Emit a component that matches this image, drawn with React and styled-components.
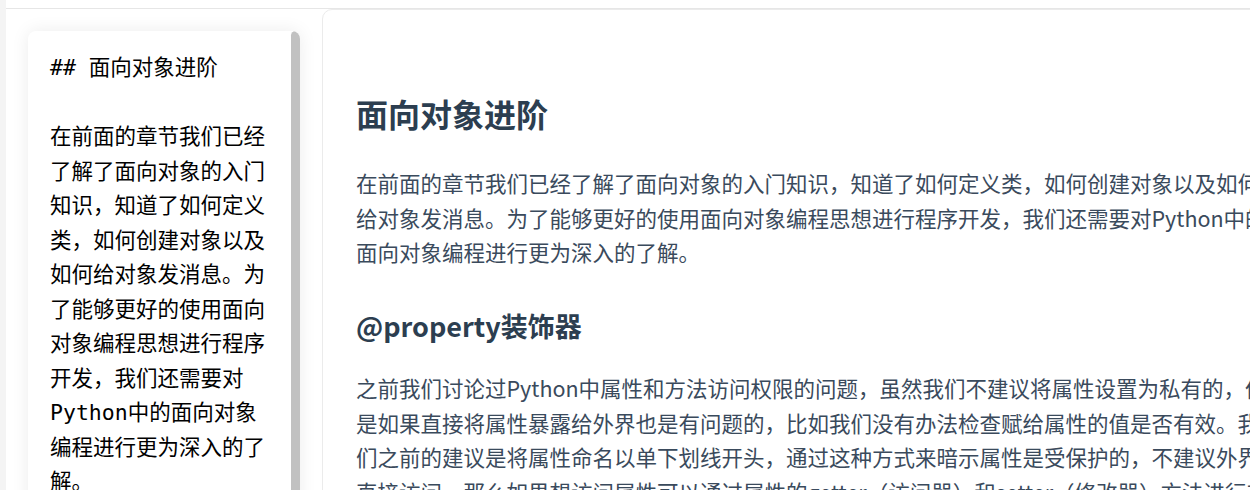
import React from 'react';
import styled, {createGlobalStyle} from "styled-components";

const source = `## 面向对象进阶

在前面的章节我们已经了解了面向对象的入门知识，知道了如何定义类，如何创建对象以及如何给对象发消息。为了能够更好的使用面向对象编程思想进行程序开发，我们还需要对Python中的面向对象编程进行更为深入的了解。

### @property装饰器

之前我们讨论过Python中属性和方法访问权限的问题，虽然我们不建议将属性设置为私有的，但是如果直接将属性暴露给外界也是有问题的，比如我们没有办法检查赋给属性的值是否有效。我们之前的建议是将属性命名以单下划线开头，通过这种方式来暗示属性是受保护的，不建议外界直接访问，那么如果想访问属性可以通过属性的getter（访问器）和setter（修改器）方法进行对应的操作。`;

const intro = "在前面的章节我们已经了解了面向对象的入门知识，知道了如何定义类，如何创建对象以及如何给对象发消息。为了能够更好的使用面向对象编程思想进行程序开发，我们还需要对Python中的面向对象编程进行更为深入的了解。";
const propertyText = "之前我们讨论过Python中属性和方法访问权限的问题，虽然我们不建议将属性设置为私有的，但是如果直接将属性暴露给外界也是有问题的，比如我们没有办法检查赋给属性的值是否有效。我们之前的建议是将属性命名以单下划线开头，通过这种方式来暗示属性是受保护的，不建议外界直接访问，那么如果想访问属性可以通过属性的getter（访问器）和setter（修改器）方法进行对应的操作。如果要做到这点，就可以考虑使用@property包装器来包装getter和setter方法，使得对属性的访问既安全又方便。";

export default function App() {
    return (
        <>
            <GlobalStyle/>
            <Shell>
                <TopBar/>
                <Main>
                    <EditorColumn>
                        <EditorCard>
                            <Editor readOnly value={source} spellCheck={false}/>
                            <ScrollThumb/>
                        </EditorCard>
                    </EditorColumn>
                    <Preview>
                        <Title>面向对象进阶</Title>
                        <Paragraph>{intro}</Paragraph>
                        <SubTitle>@property装饰器</SubTitle>
                        <Paragraph>{propertyText}</Paragraph>
                    </Preview>
                </Main>
            </Shell>
        </>
    );
}

const GlobalStyle = createGlobalStyle`
  html, body {
    margin: 0;
    height: 100%;
    overflow: hidden;
    background: #f4f4f4;
  }
  #root {
    height: 100%;
  }
`

const Shell = styled.div`
  margin-left: 6px;
  height: 100%;
  background: #ffffff;
  display: flex;
  flex-direction: column;
`

const TopBar = styled.div`
  height: 8px;
  flex: none;
  border-bottom: 1px solid #e6e6e6;
`

const Main = styled.div`
  flex: 1;
  display: flex;
  align-items: flex-start;
  overflow: hidden;
`

const EditorColumn = styled.div`
  flex: none;
  width: 316px;
  padding: 22px 22px 0 22px;
  box-sizing: border-box;
`

const EditorCard = styled.div`
  position: relative;
  width: 272px;
  height: 860px;
  border-radius: 8px;
  background: #fff;
  box-shadow: 0 0 18px rgba(0, 0, 0, 0.08);
  overflow: hidden;
`

const Editor = styled.textarea`
  display: block;
  width: 100%;
  height: 100%;
  box-sizing: border-box;
  padding: 20px 22px 20px 22px;
  border: none;
  outline: none;
  resize: none;
  background: transparent;
  color: #000;
  font-family: "DejaVu Sans Mono", "Noto Sans CJK SC", monospace;
  font-size: 21.5px;
  line-height: 34.5px;
  overflow: hidden;
`

const ScrollThumb = styled.div`
  position: absolute;
  top: 0;
  right: 0;
  width: 9px;
  height: 620px;
  background: #c1c1c1;
  border-radius: 5px;
`

const Preview = styled.div`
  flex: none;
  width: 992px;
  min-height: 600px;
  padding: 84px 40px 0 33px;
  box-sizing: border-box;
  border: 1px solid #ebebeb;
  border-radius: 10px;
  background: #fff;
  font-family: "Noto Sans CJK SC", "Noto Sans", sans-serif;
  color: #3a4a5c;
`

const Title = styled.h1`
  margin: 0 0 34px;
  font-size: 32px;
  line-height: 1.2;
  font-weight: 700;
  color: #2c3e50;
`

const SubTitle = styled.h2`
  margin: 40px 0 29px;
  font-size: 27px;
  line-height: 1.2;
  font-weight: 700;
  color: #2c3e50;
`

const Paragraph = styled.p`
  margin: 0;
  width: 918px;
  font-size: 21.5px;
  line-height: 34.5px;
`
